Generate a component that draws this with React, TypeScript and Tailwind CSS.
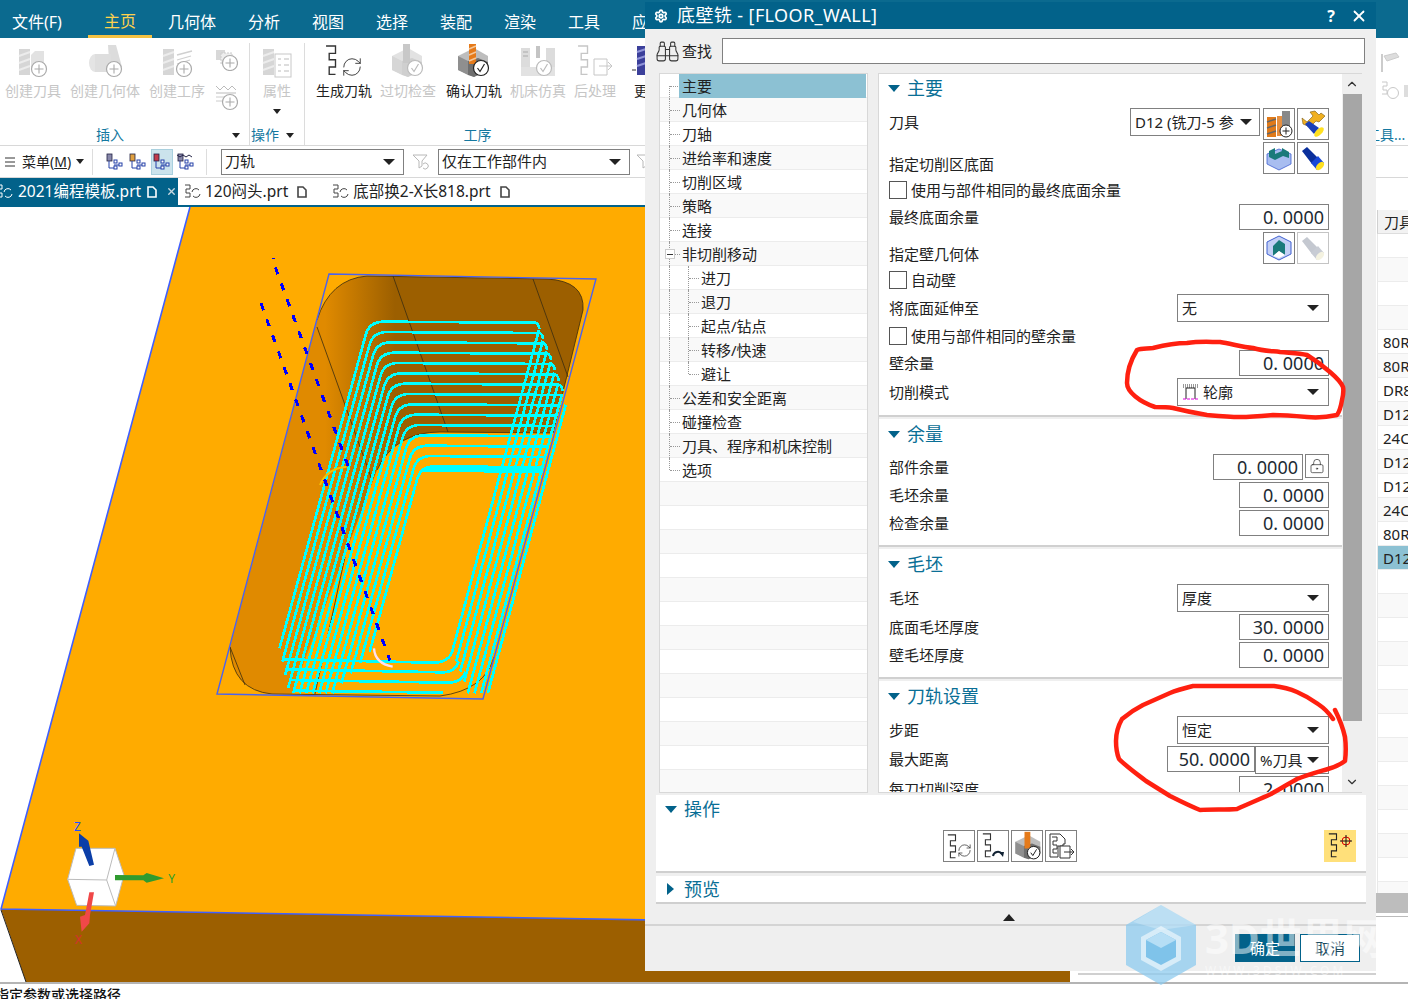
import React from "react";
import { Binoculars, RefreshCw, Settings, X, LockKeyhole, ChevronUp, ChevronDown } from "lucide-react";

const Tri = () => <span className="w-0 h-0 border-x-[6px] border-x-transparent border-t-[6px] border-t-[#222] shrink-0" />;

const Zig = ({ c = "#333", x = 0, y = 0, s = 1 }: { c?: string; x?: number; y?: number; s?: number }) => (
  <path transform={`translate(${x} ${y}) scale(${s})`} d="M1 1H10V8H4V14H10V21H4V28H10" fill="none" stroke={c} strokeWidth="1.3" />
);
const Badge = ({ plus, c = "#aaa", x = 26, y = 26 }: { plus?: boolean; c?: string; x?: number; y?: number }) => (
  <g>
    <circle cx={x} cy={y} r="7.5" fill="#fff" stroke={c} strokeWidth="1.2" />
    {plus ? (
      <path d={`M${x - 4.5} ${y}H${x + 4.5}M${x} ${y - 4.5}V${y + 4.5}`} stroke={c} strokeWidth="1.1" />
    ) : (
      <path d={`M${x - 3.5} ${y}L${x - 1} ${y + 3.5}L${x + 3.5} ${y - 4}`} fill="none" stroke={c} strokeWidth="1.2" />
    )}
  </g>
);
const Svg = ({ children, w = 40, h = 36 }: { children: React.ReactNode; w?: number; h?: number }) => (
  <svg width={w} height={h} viewBox={`0 0 ${w} ${h}`} className="block">
    {children}
  </svg>
);
const GrayCyl = () => (
  <g>
    <rect x="6" y="6" width="11" height="26" fill="#d6d6d6" />
    <path d="M6 13L17 9M6 20L17 16M6 27L17 23" stroke="#ececec" strokeWidth="2" />
  </g>
);
const IcoTool = () => (
  <Svg>
    <GrayCyl />
    <path d="M18 12l4-4h9v18H18z" fill="#e2e2e2" />
    <Badge plus />
  </Svg>
);
const IcoGeo = () => (
  <Svg>
    <path d="M23 2l8 0 6 22-12 8z" fill="#dcdcdc" />
    <ellipse cx="10" cy="20" rx="6" ry="9" fill="#e4e4e4" />
    <rect x="10" y="11" width="16" height="18" fill="#dedede" />
    <Badge plus x={29} />
  </Svg>
);
const IcoOp = () => (
  <Svg>
    <GrayCyl />
    <path d="M20 12L35 8M20 17L34 13M20 21L33 17" stroke="#d0d0d0" strokeWidth="1.3" />
    <Badge plus x={27} />
  </Svg>
);
const IcoSmall1 = () => (
  <Svg w={24} h={24}>
    <rect x="2" y="3" width="9" height="10" fill="#d8d8d8" />
    <rect x="7" y="6" width="11" height="11" fill="#eee" stroke="#ccc" strokeDasharray="2 1" />
    <Badge plus x={16} y={16} />
  </Svg>
);
const IcoSmall2 = () => (
  <Svg w={24} h={28}>
    <path d="M2 3l4 4 4-4 4 4 4-4 4 4M2 10h20" stroke="#bbb" fill="none" />
    <path d="M2 14h10M2 18h8" stroke="#ccc" />
    <Badge plus x={16} y={19} />
  </Svg>
);
const IcoAttr = () => (
  <Svg>
    <GrayCyl />
    <rect x="18" y="11" width="16" height="23" fill="#fff" stroke="#c8c8c8" />
    <path d="M21 16h3M27 16h5M21 22h3M27 22h5M21 28h3M27 28h5" stroke="#bbb" />
  </Svg>
);
const IcoGen = () => (
  <svg width="44" height="36" viewBox="0 0 44 36" className="block">
    <Zig c="#333" x={3} y={2} s={1.05} />
    <g transform="translate(19 13)">
      <RefreshCw width={22} height={22} strokeWidth={1} color="#333" x={0} y={0} />
    </g>
  </svg>
);
const Block = ({ a = "#d8d8d8", b = "#c4c4c4", c = "#b4b4b4" }) => (
  <g>
    <path d="M4 13L20 5L34 13V27L20 34L4 27Z" fill={a} />
    <path d="M4 13L14 18V32L4 27Z" fill={b} />
    <path d="M14 18L24 15L34 19V27L20 34L14 32Z" fill={c} />
  </g>
);
const IcoGouge = () => (
  <Svg>
    <Block a="#e2e2e2" b="#d6d6d6" c="#cfcfcf" />
    <rect x="15" y="1" width="7" height="19" fill="#c8c8c8" />
    <Badge x={27} y={25} c="#bbb" />
  </Svg>
);
const IcoVerify = () => (
  <Svg>
    <Block a="#bdbdbd" b="#8f8f8f" c="#6f6f6f" />
    <rect x="15" y="1" width="7" height="20" fill="#e57a1a" />
    <path d="M15 6l7-3M15 12l7-3M15 18l7-3" stroke="#f5c79a" strokeWidth="1.4" />
    <Badge x={27} y={25} c="#222" />
  </Svg>
);
const IcoSim = () => (
  <Svg>
    <rect x="3" y="5" width="9" height="24" fill="#dcdcdc" />
    <rect x="28" y="5" width="9" height="24" fill="#dcdcdc" />
    <rect x="3" y="24" width="34" height="9" fill="#e2e2e2" />
    <rect x="18" y="3" width="4" height="12" fill="#c4c4c4" />
    <path d="M5 9h5M5 13h5" stroke="#aaa" />
    <Badge x={26} y={25} c="#bbb" />
  </Svg>
);
const IcoPost = () => (
  <Svg>
    <Zig c="#c6c6c6" x={2} y={2} s={1.05} />
    <path d="M19 16H32V32H19Z" fill="#fff" stroke="#c6c6c6" />
    <path d="M24 23H37M33 19l4 4-4 4" stroke="#c6c6c6" fill="none" />
  </Svg>
);
const IcoMore = () => (
  <Svg w={20}>
    <rect x="6" y="3" width="9" height="29" fill="#3b3f9a" />
    <path d="M6 9l9-3M6 16l9-3M6 23l9-3" stroke="#8f93d8" strokeWidth="2" />
    <path d="M1 27h4" stroke="#333" />
  </Svg>
);
const RItem = ({ icon, label, c = "text-[#c6c6c6]", cls = "" }: { icon: React.ReactNode; label: string; c?: string; cls?: string }) => (
  <div className={`flex flex-col items-center shrink-0 ${cls}`}>
    <div className="h-[34px] flex items-start">{icon}</div>
    <div className={`mt-[4px] text-[14px] leading-[20px] whitespace-nowrap ${c}`}>{label}</div>
  </div>
);
const GroupLabel = ({ children, cls = "" }: { children: string; cls?: string }) => (
  <span className={`text-[14px] leading-[20px] text-[#1478a0] ${cls}`}>{children}</span>
);
const MiniTri = () => <span className="block w-0 h-0 border-x-[4px] border-x-transparent border-t-[5px] border-t-[#222]" />;

const MenuBar = () => (
  <div className="h-[38px] shrink-0 bg-[#0b6a8f] flex items-center text-[16px] text-white pl-[12px] pt-[6px] relative">
    <span className="w-[51px]">文件(F)</span>
    <div className="ml-[25px] w-[64px] h-[32px] flex items-center justify-center text-[#ffd24d] border-b-[3px] border-b-[#f5c242]">主页</div>
    <div className="ml-[16px] flex gap-[32px] whitespace-nowrap">
      {["几何体", "分析", "视图", "选择", "装配", "渲染", "工具", "应用"].map((t) => (
        <span key={t}>{t}</span>
      ))}
    </div>
  </div>
);

const Ribbon = () => (
  <div className="h-[108px] shrink-0 bg-white border-b border-b-[#d8d8d8] flex pt-[5px]">
    <div className="w-[250px] h-[102px] flex flex-col border-r border-r-[#dcdcdc] shrink-0">
      <div className="flex-1 flex pl-[5px]">
        <RItem cls="w-[56px]" icon={<IcoTool />} label="创建刀具" />
        <RItem cls="w-[70px] ml-[9px]" icon={<IcoGeo />} label="创建几何体" />
        <RItem cls="w-[56px] ml-[9px]" icon={<IcoOp />} label="创建工序" />
        <div className="ml-[9px] flex flex-col gap-[12px] pt-[4px]">
          <IcoSmall1 />
          <IcoSmall2 />
        </div>
      </div>
      <div className="h-[20px] flex items-center relative">
        <GroupLabel cls="ml-[96px]">插入</GroupLabel>
        <span className="ml-[108px]">
          <MiniTri />
        </span>
      </div>
    </div>
    <div className="w-[55px] h-[102px] flex flex-col border-r border-r-[#dcdcdc] shrink-0">
      <div className="flex-1 flex flex-col items-center">
        <RItem icon={<IcoAttr />} label="属性" />
        <span className="mt-[8px]">
          <MiniTri />
        </span>
      </div>
      <div className="h-[20px] flex items-center pl-[1px] gap-[7px]">
        <GroupLabel>操作</GroupLabel>
        <MiniTri />
      </div>
    </div>
    <div className="w-[345px] h-[102px] flex flex-col shrink-0">
      <div className="flex-1 flex">
        <RItem cls="w-[56px] ml-[11px]" c="text-[#222]" icon={<IcoGen />} label="生成刀轨" />
        <RItem cls="w-[56px] ml-[8px]" icon={<IcoGouge />} label="过切检查" />
        <RItem cls="w-[56px] ml-[10px]" c="text-[#222]" icon={<IcoVerify />} label="确认刀轨" />
        <RItem cls="w-[56px] ml-[8px]" icon={<IcoSim />} label="机床仿真" />
        <RItem cls="w-[42px] ml-[8px]" icon={<IcoPost />} label="后处理" />
        <RItem cls="w-[20px] ml-[15px]" c="text-[#222]" icon={<IcoMore />} label="更" />
      </div>
      <div className="h-[20px] flex items-center justify-center">
        <GroupLabel>工序</GroupLabel>
      </div>
    </div>
    <div className="ml-auto w-[32px] h-[102px] flex flex-col shrink-0 pl-[4px] overflow-visible">
      <svg width="24" height="26" viewBox="0 0 24 26" className="mt-[6px] block">
        <path d="M2 5v18" stroke="#ccc" strokeWidth="2" />
        <path d="M4 7l12-3 3 4-12 4z" fill="#ddd" stroke="#ccc" />
      </svg>
      <svg width="28" height="22" viewBox="0 0 28 22" className="mt-[5px] block">
        <path d="M2 2h5v4H3v4h4v4H2" fill="none" stroke="#c8c8c8" />
        <circle cx="13" cy="13" r="5.5" fill="#fff" stroke="#c8c8c8" />
        <rect x="24" y="5" width="5" height="12" fill="#ddd" />
      </svg>
      <div className="mt-auto -ml-[14px] h-[20px] text-[14px] leading-[20px] text-[#1478a0] whitespace-nowrap">工具...</div>
    </div>
  </div>
);

const SmallTree = ({ v }: { v: number }) => (
  <svg width="20" height="20" viewBox="0 0 20 20" className="block">
    <rect x="2" y="2" width="5" height="7" fill={v === 2 ? "#c23a4a" : v === 1 ? "#e0a040" : "#88a"} stroke="#224" strokeWidth="0.8" />
    {v === 3 && <path d="M1 3l3 2 3-2 3 2 3-2 3 2" stroke="#224" fill="none" />}
    <path d="M4 9v7h5M9 13h5" stroke="#2540a8" fill="none" />
    <rect x="9" y="8" width="3" height="3" fill="#fff" stroke="#2540a8" />
    <rect x="14" y="11" width="3" height="3" fill="#fff" stroke="#2540a8" />
    <rect x="9" y="14" width="3" height="3" fill="#fff" stroke="#2540a8" />
  </svg>
);
const Funnel = () => (
  <svg width="18" height="18" viewBox="0 0 18 18" className="block">
    <path d="M1 2h14l-5 6v5l-3 2V8z" fill="#fff" stroke="#b8b8b8" />
    <path d="M11 15a3 3 0 1 0 0-4" fill="none" stroke="#b8b8b8" />
  </svg>
);
const ToolSel = ({ text, cls }: { text: string; cls: string }) => (
  <div className={`h-[26px] border border-[#808080] bg-white flex items-center justify-between pl-[3px] pr-[8px] text-[15px] text-[#222] shrink-0 ${cls}`}>
    <span>{text}</span>
    <Tri />
  </div>
);
const Toolbar = () => (
  <div className="h-[32px] shrink-0 bg-white flex items-center border-b border-b-[#d8d8d8]">
    <svg width="10" height="10" viewBox="0 0 10 10" className="ml-[5px] block shrink-0">
      <path d="M0 1h10M0 5h10M0 9h10" stroke="#333" />
    </svg>
    <span className="ml-[7px] text-[14px] text-[#222] whitespace-nowrap">
      菜单(<span className="underline">M</span>)
    </span>
    <span className="ml-[5px]">
      <MiniTri />
    </span>
    <div className="ml-[8px] w-px h-[26px] bg-[#ddd]" />
    <div className="ml-[12px] flex items-center gap-[3px]">
      <SmallTree v={0} />
      <SmallTree v={1} />
      <div className="w-[22px] h-[26px] bg-[#cbe3ec] border border-[#a9d0de] flex items-center justify-center">
        <SmallTree v={2} />
      </div>
      <SmallTree v={3} />
    </div>
    <div className="ml-[10px] w-px h-[26px] bg-[#ddd]" />
    <ToolSel cls="ml-[14px] w-[183px]" text="刀轨" />
    <span className="ml-[8px] w-[26px]">
      <Funnel />
    </span>
    <ToolSel cls="w-[192px]" text="仅在工作部件内" />
    <span className="ml-[6px]">
      <Funnel />
    </span>
  </div>
);
const TabIcon = ({ c }: { c: string }) => (
  <svg width="18" height="16" viewBox="0 0 18 16" className="block shrink-0">
    <path d="M1 1h5v4H2v4h4v4H1" fill="none" stroke={c} />
    <path d="M8 8a4 4 0 0 1 7-2M16 10a4 4 0 0 1-7 2" fill="none" stroke={c} />
  </svg>
);
const Doc = ({ c }: { c: string }) => (
  <svg width="10" height="12" viewBox="0 0 10 12" className="block shrink-0">
    <path d="M1 1h5l3 3v7H1z" fill="none" stroke={c} strokeWidth="1.6" />
  </svg>
);
const Tabs = () => (
  <div className="h-[29px] shrink-0 bg-white flex border-b-2 border-b-[#02628a] text-[15.5px] text-[#222] whitespace-nowrap">
    <div className="w-[178px] shrink-0 bg-[#02628a] text-white flex items-center overflow-hidden">
      <span className="-ml-[4px] shrink-0">
        <TabIcon c="#fff" />
      </span>
      <span className="ml-[4px]">2021编程模板.prt</span>
      <span className="ml-[6px]">
        <Doc c="#fff" />
      </span>
      <X className="ml-[9px] shrink-0" size={11} strokeWidth={3} color="#c8d8e0" />
    </div>
    <div className="ml-[6px] flex items-center gap-[3px]">
      <TabIcon c="#444" />
      <span>120闷头.prt</span>
      <span className="ml-[6px]">
        <Doc c="#444" />
      </span>
    </div>
    <div className="ml-[25px] flex items-center gap-[3px]">
      <TabIcon c="#444" />
      <span>底部换2-X长818.prt</span>
      <span className="ml-[6px]">
        <Doc c="#444" />
      </span>
    </div>
  </div>
);

const Model = () => {
  const topLines = Array.from({ length: 15 }, (_, i) => {
    const T = 245 + 31 * i;
    const xl = 508 + 11 * i;
    const xr = i <= 6 ? 1000 + 11.7 * i : 1085 - 0.27 * (T - 460);
    const end = [1225, 1265, 1305, 1345, 1360, 1360, 1360, 1360, 1360, 1360, 1360, 1330, 1300, 1270, 1235][i];
    const yy = T + 42;
    const xs = xl - 0.275 * 42;
    const xe = xl - 0.275 * (end - T);
    const rc = i <= 6 ? ` Q${xr + 15} ${T} ${xr + 18} ${T + 22}` : "";
    return `M${xe} ${end} L${xs} ${yy} Q${xs + 10} ${T + 2} ${xs + 50} ${T} L${xr} ${T + 3}${rc}`;
  });
  const rightLines = Array.from({ length: 8 }, (_, j) => {
    const x0 = 1017 + 11.5 * j;
    const y0 = 270 + 32 * j;
    const end = [1235, 1265, 1295, 1325, 1360, 1360, 1360, 1360][j];
    return `M${x0} ${y0} L${x0 - 0.27 * (end - y0)} ${end}`;
  });
  const bottoms = [
    "M245 1258 L700 1268 Q745 1268 757 1235",
    "M255 1288 L730 1297 Q765 1297 777 1265",
    "M268 1320 L745 1328 Q785 1328 797 1295",
    "M282 1352 L730 1358",
  ];
  return (
    <svg width="1070" height="775" viewBox="0 207 1070 775" className="block shrink-0">
      <defs>
        <linearGradient id="wall" gradientUnits="userSpaceOnUse" x1="325" y1="0" x2="395" y2="0">
          <stop offset="0" stopColor="#e08a00" />
          <stop offset="1" stopColor="#9c5f00" />
        </linearGradient>
      </defs>
      <rect x="0" y="207" width="1070" height="775" fill="#fff" />
      <path d="M190 207H1070V927L1 909Z" fill="#ffab00" />
      <path d="M1 909L1070 927V982H26Z" fill="#9c5f00" />
      <path d="M190 207L1 909L1070 927" fill="none" stroke="#3f5fff" strokeWidth="1.6" />
      <path d="M1 910L26 982" fill="none" stroke="#222" strokeWidth="1" />
      <path
        d="M317 320Q330 279 367 276L547 279Q585 281 583 310L553 433L440 432Q395 432 377 470L292 694H272Q232 690 230 647Z"
        fill="url(#wall)"
      />
      <g fill="none" stroke="#3a2c10" strokeWidth="0.8">
        <path d="M317 320Q330 279 367 276L547 279Q585 281 583 310L553 433L440 432Q395 432 377 470" />
        <path d="M230 647Q232 690 272 694L440 696Q485 690 494 657" />
        <path d="M393 276L448 432M533 279L568 377M317 327L372 480M315 694L345 557M230 647L245 685" />
      </g>
      <path d="M329 274L596 279L483 699L217 694Z" fill="none" stroke="#4a62f0" strokeWidth="1.4" />
      <g transform="translate(200 240) scale(0.33333)" fill="none">
        <g stroke="#00ffff" strokeWidth="8" strokeLinejoin="round" shapeRendering="crispEdges">
          {topLines.map((d, i) => (
            <path key={i} d={d} />
          ))}
          {rightLines.map((d, i) => (
            <path key={i} d={d} />
          ))}
          {bottoms.map((d, i) => (
            <path key={i} d={d} />
          ))}
          <path d="M665 690L1030 692" strokeWidth="13" />
        </g>
        <path d="M360 735Q380 685 440 680" stroke="#f5c000" strokeWidth="6" />
        <path d="M522 1225Q525 1270 578 1280" stroke="#ffe0f0" strokeWidth="7" />
        <g stroke="#0000ff" strokeWidth="9" strokeDasharray="22 29" shapeRendering="crispEdges">
          <path d="M183 190L570 1262" />
          <path d="M226 82L445 680" />
          <path d="M216 55H224" strokeWidth="4" />
        </g>
      </g>
      <g transform="translate(0 800) scale(0.33333)">
        <path d="M228 145H345L372 225L347 318L230 316L203 238Z" fill="#fff" stroke="#bbb" strokeWidth="3" />
        <path d="M203 238L320 240L345 145M320 240L347 318" fill="none" stroke="#bbb" strokeWidth="3" />
        <path d="M237 100L265 122L282 194L268 198L245 140L237 140Z" fill="#0b3ea8" />
        <path d="M345 225L430 226L440 219L492 235L440 248L430 241H345Z" fill="#2f9b2f" />
        <path d="M268 277H282L270 345L268 370L245 395L240 350L255 345Z" fill="#f04848" />
        <text x="222" y="92" fontSize="36" fill="#2050ff">Z</text>
        <text x="505" y="250" fontSize="36" fill="#2aa02a">Y</text>
        <text x="225" y="432" fontSize="36" fill="#d83030">X</text>
      </g>
    </svg>
  );
};

const treeItems: [string, number][] = [
  ["主要", 0], ["几何体", 0], ["刀轴", 0], ["进给率和速度", 0], ["切削区域", 0], ["策略", 0], ["连接", 0], ["非切削移动", 0],
  ["进刀", 1], ["退刀", 1], ["起点/钻点", 1], ["转移/快速", 1], ["避让", 1],
  ["公差和安全距离", 0], ["碰撞检查", 0], ["刀具、程序和机床控制", 0], ["选项", 0],
];
const TreeRow = ({ i }: { i: number }) => {
  const it = treeItems[i];
  const stripe = i % 2 === 1 ? "bg-[#f9f9f9]" : "bg-white";
  return (
    <div className={`relative h-[24px] shrink-0 border-b border-b-[#ececec] text-[15px] leading-[24px] text-[#222] ${stripe}`}>
      {it && (
        <>
          <span className={`absolute left-[9px] border-l border-dotted border-l-[#999] ${i === 0 ? "top-[12px] bottom-0" : i === 16 ? "top-0 h-[12px]" : "top-0 bottom-[-1px]"}`} />
          {it[1] === 0 && <span className="absolute left-[10px] top-[12px] w-[10px] border-t border-dotted border-t-[#999]" />}
          {it[1] === 1 && (
            <>
              <span className={`absolute left-[28px] border-l border-dotted border-l-[#999] ${i === 12 ? "top-0 h-[12px]" : "top-0 bottom-[-1px]"}`} />
              <span className="absolute left-[29px] top-[12px] w-[10px] border-t border-dotted border-t-[#999]" />
            </>
          )}
          {i === 7 && (
            <span className="absolute left-[5px] top-[7px] w-[10px] h-[10px] border border-[#ccc] bg-white flex items-center justify-center">
              <span className="w-[6px] h-px bg-[#333]" />
            </span>
          )}
          {i === 0 ? (
            <div className="absolute left-[19px] right-[1px] top-0 h-[24px] bg-[#8cc1d3] pl-[3px]">{it[0]}</div>
          ) : (
            <span className={`absolute top-0 whitespace-nowrap ${it[1] === 1 ? "left-[41px]" : "left-[22px]"}`}>{it[0]}</span>
          )}
        </>
      )}
    </div>
  );
};

const Num = ({ v, cls = "w-[90px]" }: { v: string; cls?: string }) => (
  <div className={`h-[26px] border border-[#808080] bg-white flex items-center justify-end pr-[4px] text-[18px] text-[#1d2b33] shrink-0 whitespace-pre ${cls}`}>{v}</div>
);
const Sel = ({ children, cls = "w-[152px]" }: { children: React.ReactNode; cls?: string }) => (
  <div className={`h-[28px] border border-[#808080] bg-white flex items-center justify-between pl-[4px] pr-[9px] text-[15px] text-[#222] shrink-0 whitespace-nowrap ${cls}`}>
    <span className="flex items-center">{children}</span>
    <Tri />
  </div>
);
const Btn = ({ children, off }: { children: React.ReactNode; off?: boolean }) => (
  <div className={`w-[32px] h-[32px] border bg-white flex items-center justify-center shrink-0 ${off ? "border-[#c4c4c4]" : "border-[#808080]"}`}>{children}</div>
);
const Row = ({ label, children, cls = "h-[28px]", lh = "leading-[26px]" }: { label: string; children?: React.ReactNode; cls?: string; lh?: string }) => (
  <div className={`flex items-start justify-between text-[15px] text-[#222] ${cls}`}>
    <span className={`whitespace-nowrap ${lh}`}>{label}</span>
    {children}
  </div>
);
const Chk = ({ label }: { label: string }) => (
  <div className="h-[28px] flex items-center text-[15px] text-[#222]">
    <span className="w-[18px] h-[18px] border border-[#555] bg-white shrink-0" />
    <span className="ml-[4px] whitespace-nowrap">{label}</span>
  </div>
);
const Sec = ({ title, children, pb, last }: { title: string; children: React.ReactNode; pb: string; last?: boolean }) => (
  <div className={`bg-white ${pb} ${last ? "" : "border-b-2 border-b-[#d0d0d0] mb-[2px]"}`}>
    <div className="h-[35px] pb-[5px] flex items-center pl-[9px] text-[18px] text-[#0a6f96]">
      <span className="w-0 h-0 border-x-[6px] border-x-transparent border-t-[7px] border-t-[#02628a]" />
      <span className="ml-[7px]">{title}</span>
    </div>
    <div className="pl-[10px] pr-[13px]">{children}</div>
  </div>
);
const Flash = ({ off }: { off?: boolean }) => (
  <svg width="26" height="26" viewBox="0 0 26 26" className="block">
    <path d="M2 6L7 2L18 13L12 19Z" fill={off ? "#c4c8d0" : "#0a2f9c"} />
    <path d="M18 11L24 18L17 25L11 18Z" fill={off ? "#c8ccd4" : "#1848d8"} />
    <ellipse cx="20" cy="21" rx="5" ry="3" transform="rotate(-45 20 21)" fill={off ? "#f4f2e0" : "#ffe020"} />
  </svg>
);
const ToolAdd = () => (
  <svg width="28" height="28" viewBox="0 0 28 28" className="block">
    <rect x="12" y="6" width="9" height="20" fill="#e89040" />
    <rect x="17" y="1" width="8" height="18" fill="#888" />
    <rect x="2" y="7" width="9" height="20" fill="#e07a1a" />
    <path d="M2 12l9-3M2 18l9-3M2 24l9-3" stroke="#666" strokeWidth="1.5" />
    <circle cx="21" cy="21" r="6" fill="#fff" stroke="#222" />
    <path d="M17.5 21h7M21 17.5v7" stroke="#222" />
  </svg>
);
const WrenchFlash = () => (
  <svg width="28" height="28" viewBox="0 0 28 28" className="block">
    <path d="M3 8L8 12L14 6L11 2L16 1L20 5L22 3L26 6L20 12L17 11L11 17L4 14Z" fill="#f0b020" stroke="#7a5a10" strokeWidth="0.6" />
    <path d="M6 14L10 11L20 18L15 24Z" fill="#1a3fb8" />
    <ellipse cx="20" cy="22" rx="6" ry="3" transform="rotate(-45 20 22)" fill="#ffe020" />
  </svg>
);
const GeoBlock = () => (
  <svg width="26" height="26" viewBox="0 0 26 26" className="block">
    <path d="M1 9L13 4L25 9V19L13 25L1 19Z" fill="#a8bdf0" stroke="#4060d0" strokeWidth="0.8" />
    <path d="M3 6L9 3V9L16 6V3L23 7V13L17 11L9 15L3 12Z" fill="#1a7a7a" />
  </svg>
);
const GeoWall = () => (
  <svg width="26" height="26" viewBox="0 0 26 26" className="block">
    <path d="M13 1L25 7V19L13 25L1 19V7Z" fill="#c4d0f5" stroke="#4060d0" strokeWidth="1" />
    <path d="M7 21V11L13 5L19 9V20L13 16Z" fill="#1a7a7a" />
    <path d="M7 21L13 16L19 20L13 23Z" fill="#fff" />
  </svg>
);

const L28 = "leading-[28px]";
const Form = () => (
  <div className="w-[463px] shrink-0 -mt-px">
    <Sec title="主要" pb="pb-[9px]">
      <Row label="刀具" cls="h-[34px]" lh={L28}>
        <div className="flex">
          <Sel cls="w-[130px] !pr-[7px]"><span className="text-[15px]">D12 (铣刀-5 参</span></Sel>
          <div className="ml-[3px]"><Btn><ToolAdd /></Btn></div>
          <div className="ml-[2px]"><Btn><WrenchFlash /></Btn></div>
        </div>
      </Row>
      <div className="h-[34px] flex items-start justify-between text-[15px] text-[#222]">
        <span className="pt-[9px] leading-[26px]">指定切削区底面</span>
        <div className="flex gap-[2px]"><Btn><GeoBlock /></Btn><Btn><Flash /></Btn></div>
      </div>
      <Chk label="使用与部件相同的最终底面余量" />
      <Row label="最终底面余量"><Num v="0. 0000" /></Row>
      <div className="h-[34px] flex items-start justify-between text-[15px] text-[#222]">
        <span className="pt-[9px] leading-[26px]">指定壁几何体</span>
        <div className="flex gap-[2px]"><Btn><GeoWall /></Btn><Btn off><Flash off /></Btn></div>
      </div>
      <Chk label="自动壁" />
      <Row label="将底面延伸至" lh={L28}><Sel>无</Sel></Row>
      <Chk label="使用与部件相同的壁余量" />
      <Row label="壁余量"><Num v="0. 0000" /></Row>
      <Row label="切削模式" lh={L28}>
        <Sel>
          <svg width="18" height="18" viewBox="0 0 18 18" className="block mr-[3px]">
            <path d="M1 2h16M1 4h16" stroke="#333" strokeDasharray="1 1" />
            <path d="M4 16V5h9v11" fill="none" stroke="#222" />
            <path d="M1 16h16" stroke="#e000e0" strokeDasharray="3 1" />
          </svg>
          轮廓
        </Sel>
      </Row>
    </Sec>
    <Sec title="余量" pb="pb-[7px]">
      <Row label="部件余量">
        <div className="flex gap-[2px]">
          <Num v="0. 0000" />
          <div className="w-[24px] h-[24px] border border-[#808080] flex items-center justify-center">
            <LockKeyhole size={16} strokeWidth={1.1} color="#333" />
          </div>
        </div>
      </Row>
      <Row label="毛坯余量"><Num v="0. 0000" /></Row>
      <Row label="检查余量"><Num v="0. 0000" /></Row>
    </Sec>
    <Sec title="毛坯" pb="pb-[7px]">
      <Row label="毛坯" cls="h-[30px]" lh={L28}><Sel>厚度</Sel></Row>
      <Row label="底面毛坯厚度"><Num v="30. 0000" /></Row>
      <Row label="壁毛坯厚度"><Num v="0. 0000" /></Row>
    </Sec>
    <Sec title="刀轨设置" pb="pb-0" last>
      <Row label="步距" cls="h-[30px]" lh={L28}><Sel>恒定</Sel></Row>
      <Row label="最大距离" cls="h-[30px]">
        <div className="flex">
          <Num v="50. 0000" cls="w-[88px]" />
          <Sel cls="w-[74px]">%刀具</Sel>
        </div>
      </Row>
      <Row label="每刀切削深度"><Num v="2. 0000" /></Row>
    </Sec>
  </div>
);

const OpBtn = ({ children }: { children: React.ReactNode }) => (
  <div className="w-[32px] h-[32px] border border-[#808080] bg-white flex items-center justify-center">{children}</div>
);

const Dialog = () => (
  <div className="absolute left-[645px] top-[2px] w-[731px] h-[969px] bg-[#efefef] flex flex-col z-10">
    <div className="h-[27px] shrink-0 bg-[#02628a] flex items-center text-white text-[18px] pl-[9px] pr-[8px]">
      <Settings size={14} strokeWidth={3} />
      <span className="ml-[9px] whitespace-pre tracking-[0.4px]">底壁铣 - [FLOOR_WALL]</span>
      <span className="ml-auto font-bold text-[16px]">?</span>
      <X className="ml-[15px]" size={18} strokeWidth={2.4} />
    </div>
    <div className="h-[44px] shrink-0 flex items-center pl-[10px] pr-[11px]">
      <Binoculars size={25} strokeWidth={1} color="#333" />
      <span className="ml-[2px] text-[15px] text-[#222]">查找</span>
      <div className="ml-[10px] flex-1 h-[26px] border border-[#808080] bg-white" />
    </div>
    <div className="h-[720px] shrink-0 flex pl-[14px] pr-[14px]">
      <div className="w-[209px] border border-[#d8d8d8] flex flex-col overflow-hidden bg-white shrink-0">
        {Array.from({ length: 30 }, (_, i) => (
          <TreeRow key={i} i={i} />
        ))}
      </div>
      <div className="ml-[10px] w-[484px] border border-[#d8d8d8] border-r-0 flex bg-[#efefef] overflow-hidden">
        <div className="h-full overflow-hidden"><Form /></div>
        <div className="flex-1 relative flex flex-col items-center">
          <ChevronUp className="mt-[3px]" size={14} strokeWidth={2} color="#333" />
          <div className="mt-[3px] w-[19px] h-[627px] bg-[#a6a6a6]" />
          <ChevronDown className="mt-[54px]" size={14} strokeWidth={2} color="#333" />
        </div>
      </div>
    </div>
    <div className="mt-[2px] ml-[11px] w-[710px] h-[78px] shrink-0 bg-white border-b-2 border-b-[#cfcfcf] relative">
      <div className="h-[28px] flex items-center pl-[9px] text-[18px] text-[#0a6f96]">
        <span className="w-0 h-0 border-x-[6px] border-x-transparent border-t-[7px] border-t-[#02628a]" />
        <span className="ml-[7px]">操作</span>
      </div>
      <div className="mt-[7px] flex pl-[287px] gap-[2px]">
        <OpBtn>
          <svg width="28" height="28" viewBox="0 0 28 28" className="block">
            <Zig c="#333" x={2} y={2} s={0.85} />
            <g transform="translate(12 11)"><RefreshCw width={15} height={15} strokeWidth={1.2} color="#333" /></g>
          </svg>
        </OpBtn>
        <OpBtn>
          <svg width="28" height="28" viewBox="0 0 28 28" className="block">
            <Zig c="#333" x={3} y={1} s={0.85} />
            <path d="M14 24a5 5 0 0 1 9-2" fill="none" stroke="#123" strokeWidth="2" />
            <path d="M20 20l5 0 -1 5z" fill="#123" />
          </svg>
        </OpBtn>
        <OpBtn>
          <svg width="30" height="30" viewBox="0 0 36 36" className="block"><Block a="#bdbdbd" b="#8f8f8f" c="#6f6f6f" /><rect x="15" y="1" width="7" height="20" fill="#e57a1a" /><Badge x={26} y={26} c="#222" /></svg>
        </OpBtn>
        <OpBtn>
          <svg width="28" height="28" viewBox="0 0 28 28" className="block">
            <path d="M3 2H13L18 7V12H16V14H11V25H3Z" fill="#fff" stroke="#333" />
            <path d="M5 5h5v4H6v4h4v4H6v4h4" fill="none" stroke="#333" />
            <path d="M13 14H23V26H13Z" fill="#fff" stroke="#333" />
            <path d="M17 20H27M24 17l3 3-3 3" fill="none" stroke="#333" />
          </svg>
        </OpBtn>
      </div>
      <div className="absolute right-[10px] top-[35px] w-[32px] h-[32px] bg-[#ffe07a] flex items-center justify-center">
        <svg width="28" height="28" viewBox="0 0 28 28" className="block">
          <Zig c="#222" x={2} y={1} s={0.85} />
          <circle cx="20" cy="9" r="4" fill="none" stroke="#e00000" />
          <path d="M14 9h12M20 3v12" stroke="#111" />
        </svg>
      </div>
    </div>
    <div className="mt-[3px] ml-[11px] w-[710px] h-[28px] shrink-0 bg-white border-b-2 border-b-[#cfcfcf] flex items-center pl-[11px] text-[18px] text-[#0a6f96]">
      <span className="w-0 h-0 border-y-[6px] border-y-transparent border-l-[7px] border-l-[#02628a]" />
      <span className="ml-[10px]">预览</span>
    </div>
    <div className="h-[20px] shrink-0 flex justify-center items-end pb-[3px]">
      <span className="ml-[-4px] w-0 h-0 border-x-[6px] border-x-transparent border-b-[7px] border-b-[#222]" />
    </div>
    <div className="h-[2px] shrink-0 bg-[#d4d4d4]" />
    <div className="mt-[8px] flex justify-end pr-[16px] gap-[5px] text-[15px]">
      <div className="w-[60px] h-[28px] bg-[#02628a] text-white flex items-center justify-center">确定</div>
      <div className="w-[60px] h-[28px] bg-white border border-[#02628a] text-[#1d4a5e] flex items-center justify-center">取消</div>
    </div>
  </div>
);

const rightRows = ["", "", "", "", "80R", "80R", "DR8", "D12", "24C", "D12", "D12", "24C", "80R", "D12", ...Array(14).fill("")];

const RightPanel = () => (
  <div className="flex-1 min-w-0 flex flex-col overflow-hidden bg-white text-[15px] text-[#222]">
    <div className="h-[32px] shrink-0 border-b border-b-[#d8d8d8]" />
    <div className="h-[32px] shrink-0" />
    <div className="h-[24px] shrink-0 ml-px border-l border-l-[#d0d0d0] border-b border-b-[#ddd] bg-[#f2f2f2] pl-[6px] leading-[24px] whitespace-nowrap">刀具</div>
    <div className="h-[659px] shrink-0 overflow-hidden">
      {rightRows.map((t, i) => (
        <div key={i} className={`h-[24px] ml-px border-l border-b border-l-[#e8e8e8] border-b-[#ececec] pl-[5px] leading-[24px] whitespace-nowrap ${i === 13 ? "bg-[#8cc1d3] border-l-[#5fa8c0]" : i % 2 === 1 ? "bg-[#f9f9f9]" : "bg-white"}`}>
          {t}
        </div>
      ))}
    </div>
    <div className="h-[20px] shrink-0 bg-[#bdbdbd]" />
    <div className="h-[3px] shrink-0 bg-white" />
    <div className="h-px shrink-0 bg-[#bbb]" />
  </div>
);

const Scribbles = () => (
  <svg className="absolute left-0 top-0 z-20 pointer-events-none" width="1408" height="999" viewBox="0 0 1408 999">
    <g fill="none" stroke="#ff2010" strokeWidth="4.5" strokeLinecap="round" strokeLinejoin="round">
      <path d="M1155 407C1140 402 1127 392 1127 383C1127 370 1132 358 1137 350C1142 348 1148 349 1153 348C1165 345 1175 343 1187 343C1200 341 1210 342 1220 342C1232 344 1243 347 1253 348C1263 351 1272 351 1280 352C1290 353 1299 353 1307 355C1315 360 1323 366 1330 372C1337 378 1341 382 1343 387C1344 392 1343 396 1342 400C1341 406 1340 411 1337 415C1328 417 1318 418 1307 417C1296 416 1285 415 1273 415C1262 416 1252 417 1240 417C1228 417 1218 416 1207 415C1195 413 1185 411 1173 408C1167 407 1161 407 1155 407Z" />
      <path d="M1333 719C1329 713 1324 708 1318 704C1311 699 1304 695 1297 692C1290 689 1282 687 1274 686H1193C1185 688 1177 690 1170 693C1161 697 1152 701 1143 705C1135 709 1128 714 1122 719C1118 726 1116 733 1116 741C1116 748 1117 754 1119 759C1127 767 1137 774 1146 781C1154 786 1162 791 1170 796C1180 801 1190 806 1200 810C1212 809 1225 810 1237 809C1248 804 1260 799 1271 794C1280 789 1288 784 1297 779C1307 775 1318 772 1328 769C1335 767 1341 764 1345 761C1346 753 1346 745 1345 737C1343 728 1339 718 1335 710" />
    </g>
  </svg>
);

const Watermark = () => (
  <div className="absolute left-[1125px] top-[904px] z-30 pointer-events-none flex items-start">
    <svg width="72" height="82" viewBox="0 0 72 82" className="block shrink-0">
      <path d="M36 1L71 21V61L36 81L1 61V21Z" fill="#8ecbef" fillOpacity="0.75" />
      <path d="M36 1L71 21L36 26L8 18Z" fill="#ffffff" fillOpacity="0.25" />
      <path d="M36 22L56 33V56L36 67L16 56V33Z" fill="#ffffff" fillOpacity="0.55" />
      <path d="M36 28L51 36V53L36 61L21 53V36Z" fill="#7fc3ea" />
      <path d="M36 28L51 36L36 44L21 36Z" fill="#b6def5" />
    </svg>
    <div className="ml-[8px] flex flex-col text-white">
      <span className="text-[42px] leading-[44px] mt-[12px] font-bold opacity-50 whitespace-nowrap">3D世界网</span>
      <span className="text-[12px] leading-[14px] mt-[4px] tracking-[3px] opacity-50 whitespace-nowrap">WWW.3DSJW.COM</span>
    </div>
  </div>
);

export default function App() {
  return (
    <div className="relative w-[1408px] h-[999px] overflow-hidden bg-white flex flex-col font-['Noto_Sans','Noto_Sans_CJK_SC',sans-serif]">
      <MenuBar />
      <Ribbon />
      <div className="h-[836px] shrink-0 flex">
        <div className="w-[1376px] shrink-0 flex flex-col">
          <Toolbar />
          <Tabs />
          <div className="h-[775px] shrink-0 flex">
            <Model />
            <div className="flex-1 bg-white flex flex-col justify-end pb-[7px]">
              <div className="ml-[8px] h-[2px] bg-[#d0d0d0]" />
            </div>
          </div>
        </div>
        <RightPanel />
      </div>
      <div className="h-[17px] shrink-0 border-t-2 border-t-[#b4b4b4] bg-white -ml-[5px] text-[14px] leading-[22px] text-[#111] font-medium whitespace-nowrap overflow-hidden">指定参数或选择路径</div>
      <Dialog />
      <Scribbles />
      <Watermark />
    </div>
  );
}
